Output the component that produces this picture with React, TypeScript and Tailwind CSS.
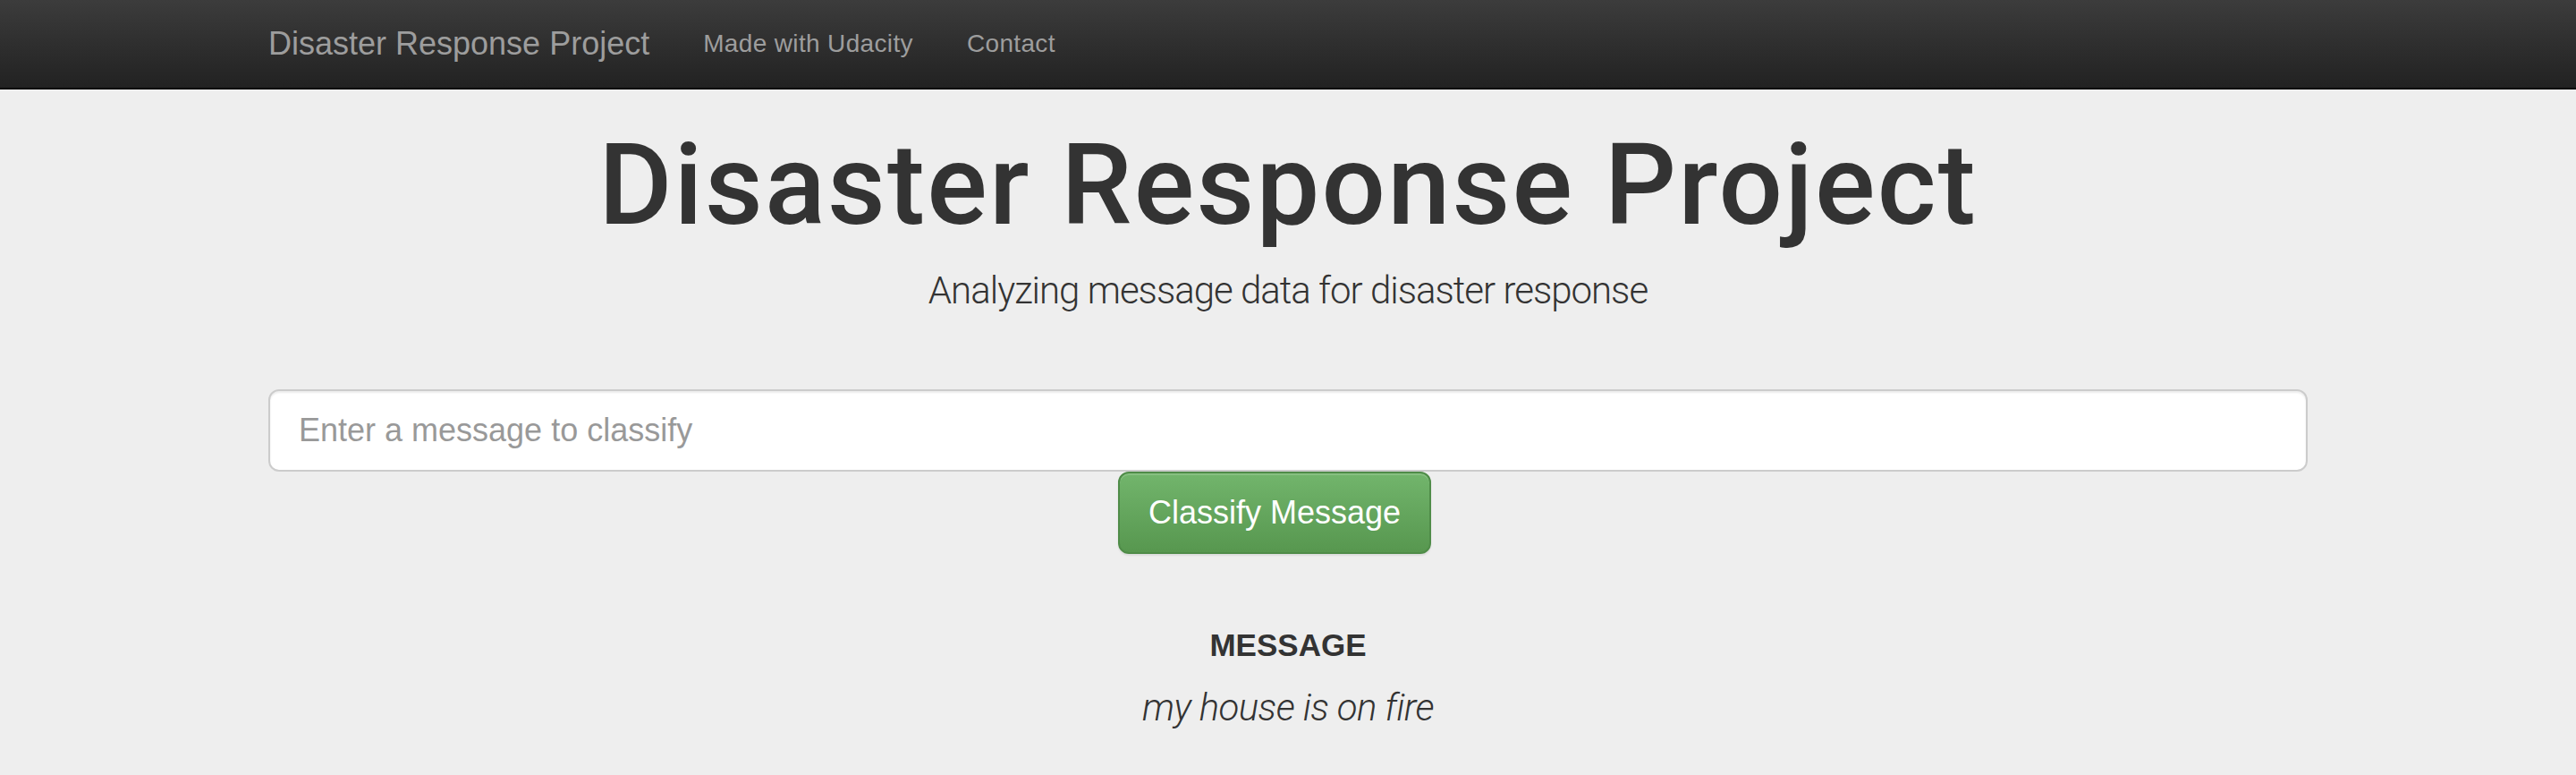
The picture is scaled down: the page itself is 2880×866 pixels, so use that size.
import React from 'react';

const NavBar = () => (
  <nav className="w-full h-[100px] bg-gradient-to-b from-[#3c3c3c] to-[#222222] border-b-2 border-[#080808]">
    <div className="mx-auto w-[2340px] px-[30px] h-[98px] flex items-center font-['Liberation_Sans',Arial,sans-serif]">
      <a href="#" className="pr-[30px] text-[36px] leading-[40px] text-[#9d9d9d]">
        Disaster Response Project
      </a>
      <ul className="flex items-center">
        <li>
          <a href="#" className="block px-[30px] text-[28px] leading-[40px] tracking-[0.35px] text-[#9d9d9d]">
            Made with Udacity
          </a>
        </li>
        <li>
          <a href="#" className="block px-[30px] text-[28px] leading-[40px] tracking-[0.35px] text-[#9d9d9d]">
            Contact
          </a>
        </li>
      </ul>
    </div>
  </nav>
);

const Jumbotron = () => (
  <div className="mx-auto w-[2340px] px-[30px] flex flex-col items-center text-[#333333]">
    <h1 className="mt-[38px] text-[126px] leading-[138px] tracking-[2.2px] font-medium font-['Roboto','Liberation_Sans',sans-serif]">
      Disaster Response Project
    </h1>
    <p className="mt-[19px] text-[42px] leading-[60px] tracking-[-1px] font-light font-['Roboto','Liberation_Sans',sans-serif]">
      Analyzing message data for disaster response
    </p>
  </div>
);

const ClassifyForm = () => (
  <form className="mx-auto w-[2340px] px-[30px] mt-[80px] flex flex-col font-['Liberation_Sans',Arial,sans-serif]">
    <input
      type="text"
      placeholder="Enter a message to classify"
      className="w-full h-[92px] px-[32px] bg-white border-2 border-[#cccccc] rounded-[12px] text-[36px] text-[#555555] placeholder:text-[#999999] outline-none shadow-[inset_0_2px_2px_rgba(0,0,0,0.075)]"
    />
    <div className="flex">
      <button
        type="button"
        className="ml-[950px] w-[350px] h-[92px] flex items-center justify-center rounded-[12px] border-2 border-[#4f8c48] bg-gradient-to-b from-[#72b56c] to-[#57974f] text-white text-[36px] shadow-[inset_0_2px_0_rgba(255,255,255,0.15),0_2px_2px_rgba(0,0,0,0.075)]"
      >
        Classify Message
      </button>
    </div>
  </form>
);

const MessageResult = () => (
  <div className="mt-[82px] flex flex-col items-center text-[#333333]">
    <h4 className="text-[35px] leading-[40px] font-bold font-['Liberation_Sans',Arial,sans-serif]">MESSAGE</h4>
    <p className="mt-[20px] text-[42px] leading-[60px] tracking-[-0.6px] italic font-light font-['Roboto','Liberation_Sans',sans-serif]">
      my house is on fire
    </p>
  </div>
);

export default function App() {
  return (
    <div className="min-h-screen bg-[#eeeeee]">
      <NavBar />
      <Jumbotron />
      <ClassifyForm />
      <MessageResult />
    </div>
  );
}
